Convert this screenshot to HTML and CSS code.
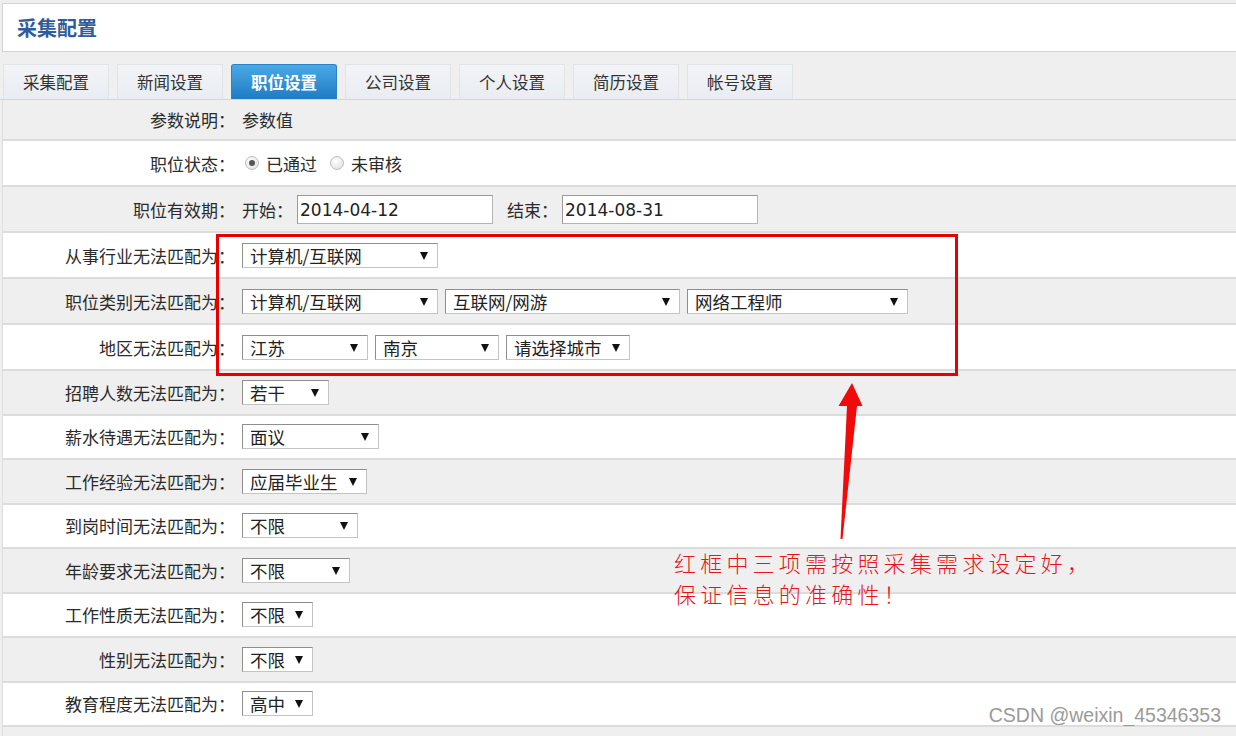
FILE: index.html
```html
<!DOCTYPE html>
<html lang="zh-CN">
  <head>
    <meta charset="utf-8">
    <title>采集配置</title>
    <link rel="stylesheet" href="styles.css">
  </head>
  <body>
    <div id="page">
      <div id="page-header">
        <h1 id="page-title">采集配置</h1>
      </div>

      <div id="tab-bar">
        <div class="tab">采集配置</div>
        <div class="tab">新闻设置</div>
        <div class="tab tab-active">职位设置</div>
        <div class="tab">公司设置</div>
        <div class="tab">个人设置</div>
        <div class="tab">简历设置</div>
        <div class="tab">帐号设置</div>
      </div>

      <div id="config-form">
        <div class="row row-head">
          <div class="row-label">参数说明：</div>
          <div class="row-value">参数值</div>
        </div>
        <div class="row row-tall">
          <div class="row-label">职位状态：</div>
          <div class="row-value">
            <span class="radio radio-on"></span><span class="radio-text">已通过</span>
            <span class="radio"></span><span class="radio-text">未审核</span>
          </div>
        </div>
        <div class="row row-tall">
          <div class="row-label">职位有效期：</div>
          <div class="row-value row-dates">
            <span class="field-name">开始：</span>
            <input class="date-input" type="text" value="2014-04-12">
            <span class="field-name field-gap">结束：</span>
            <input class="date-input" type="text" value="2014-08-31">
          </div>
        </div>
        <div class="row row-tall">
          <div class="row-label">从事行业无法匹配为：</div>
          <div class="row-value">
            <span class="select" style="width:196px">计算机/互联网</span>
          </div>
        </div>
        <div class="row row-tall">
          <div class="row-label">职位类别无法匹配为：</div>
          <div class="row-value">
            <span class="select" style="width:196px">计算机/互联网</span>
            <span class="select" style="width:235px">互联网/网游</span>
            <span class="select" style="width:221px">网络工程师</span>
          </div>
        </div>
        <div class="row row-tall">
          <div class="row-label">地区无法匹配为：</div>
          <div class="row-value">
            <span class="select" style="width:126px">江苏</span>
            <span class="select" style="width:124px">南京</span>
            <span class="select" style="width:124px">请选择城市</span>
          </div>
        </div>
        <div class="row">
          <div class="row-label">招聘人数无法匹配为：</div>
          <div class="row-value"><span class="select" style="width:87px">若干</span></div>
        </div>
        <div class="row">
          <div class="row-label">薪水待遇无法匹配为：</div>
          <div class="row-value"><span class="select" style="width:137px">面议</span></div>
        </div>
        <div class="row">
          <div class="row-label">工作经验无法匹配为：</div>
          <div class="row-value"><span class="select" style="width:125px">应届毕业生</span></div>
        </div>
        <div class="row">
          <div class="row-label">到岗时间无法匹配为：</div>
          <div class="row-value"><span class="select" style="width:116px">不限</span></div>
        </div>
        <div class="row">
          <div class="row-label">年龄要求无法匹配为：</div>
          <div class="row-value"><span class="select" style="width:108px">不限</span></div>
        </div>
        <div class="row">
          <div class="row-label">工作性质无法匹配为：</div>
          <div class="row-value"><span class="select" style="width:71px">不限</span></div>
        </div>
        <div class="row">
          <div class="row-label">性别无法匹配为：</div>
          <div class="row-value"><span class="select" style="width:71px">不限</span></div>
        </div>
        <div class="row">
          <div class="row-label">教育程度无法匹配为：</div>
          <div class="row-value"><span class="select" style="width:71px">高中</span></div>
        </div>
        <div class="row">
          <div class="row-label"></div>
          <div class="row-value"><span class="select" style="width:71px"></span></div>
        </div>
      </div>

      <!-- annotation layer drawn over the form -->
      <div id="note-box"></div>
      <svg id="note-arrow" width="40" height="170" viewBox="830 380 40 170">
        <polygon points="852,383 862.5,406 857,406 842.5,539 840.5,539 847,406 838.5,406" fill="#f00a0a"/>
      </svg>
      <div id="note-text">红框中三项需按照采集需求设定好，<br>保证信息的准确性！</div>
      <div id="watermark">CSDN @weixin_45346353</div>
    </div>
  </body>
</html>
```

FILE: styles.css
```css
html, body {
  margin: 0;
  padding: 0;
  overflow: hidden;
}
body {
  background-color: #efefef;
  color: #2b2b2b;
  font-family: "DejaVu Sans", "Noto Sans CJK SC", sans-serif;
  font-size: 17px;
}
#page {
  position: relative;
  padding-top: 3px;
}
#page-header {
  height: 47px;
  margin-left: 2px;
  background-color: #fff;
  border: 1px solid #d3d3d3;
  border-right: none;
  display: flex;
  align-items: center;
}
#page-title {
  margin: 0 0 0 14px;
  font-family: "Noto Sans CJK SC", sans-serif;
  font-size: 20px;
  font-weight: bold;
  color: #2f5c9a;
}
#tab-bar {
  display: flex;
  gap: 8px;
  padding: 12px 0 0 3px;
  height: 35px;
  border-bottom: 1px solid #d6d6d6;
}
.tab {
  width: 104px;
  height: 34px;
  display: flex;
  align-items: center;
  justify-content: center;
  background: linear-gradient(#f2f4f7, #e9ecf1);
  border: 1px solid #e0e3e8;
  border-bottom: none;
  font-family: "Noto Sans CJK SC", sans-serif;
  font-size: 16.5px;
  color: #333;
}
.tab-active {
  background: linear-gradient(#4aa9e6, #1f7bc4);
  border-color: #2a83c8;
  border-radius: 3px 3px 0 0;
  color: #fff;
  font-weight: bold;
}
#config-form {
  margin-left: 2px;
  border-left: 1px solid #dedede;
}
.row {
  display: flex;
  align-items: center;
  box-sizing: border-box;
  height: 44.5px;
  border-bottom: 2px solid #dcdcdc;
  background-color: #fff;
}
.row:nth-child(odd) {
  background-color: #efefef;
}
.row-head {
  height: 41px;
}
.row-tall {
  height: 46px;
}
.row-label {
  width: 232px;
  flex: none;
  text-align: right;
  font-family: "Noto Sans CJK SC", sans-serif;
}
.row-value {
  display: flex;
  align-items: center;
  gap: 7px;
  padding-left: 7px;
  font-family: "Noto Sans CJK SC", sans-serif;
}
.row-dates {
  gap: 4px;
}
.radio {
  width: 12px;
  height: 12px;
  border: 1px solid #bdbdbd;
  border-radius: 50%;
  background: radial-gradient(circle at 40% 35%, #fff, #dcdcdc);
  display: flex;
  align-items: center;
  justify-content: center;
  margin-left: 3px;
}
.radio-on::after {
  content: "";
  width: 6px;
  height: 6px;
  border-radius: 50%;
  background-color: #555;
}
.radio-text {
  margin-right: 3px;
}
.field-gap {
  margin-left: 10px;
}
.date-input {
  box-sizing: border-box;
  width: 196px;
  height: 29px;
  margin: 0;
  padding: 2px 2px 0;
  border: 1px solid #b4b4b4;
  border-top-color: #9a9a9a;
  border-left-color: #9a9a9a;
  background-color: #fff;
  font-family: "DejaVu Sans", sans-serif;
  font-size: 17px;
  color: #222;
  outline: none;
}
.select {
  position: relative;
  box-sizing: border-box;
  height: 25px;
  padding: 0 0 0 7px;
  display: flex;
  align-items: center;
  background-color: #fff;
  border: 1px solid #c4c4c4;
  border-top-color: #8e8e8e;
  border-left-color: #8e8e8e;
  font-family: "Noto Sans CJK SC", sans-serif;
  font-size: 17.5px;
  color: #222;
  white-space: nowrap;
}
.select::after {
  content: "";
  position: absolute;
  right: 9px;
  top: 8px;
  border-left: 4px solid transparent;
  border-right: 4px solid transparent;
  border-top: 8px solid #111;
}
#note-box {
  position: absolute;
  left: 216px;
  top: 234px;
  width: 736px;
  height: 136px;
  border: 3px solid #e60000;
}
#note-arrow {
  position: absolute;
  left: 830px;
  top: 380px;
}
#note-text {
  position: absolute;
  left: 674px;
  top: 547px;
  font-family: "Noto Sans CJK SC", sans-serif;
  font-size: 22px;
  font-weight: 300;
  letter-spacing: 4.2px;
  line-height: 31px;
  color: #e8141b;
}
#watermark {
  position: absolute;
  right: 15px;
  top: 704px;
  font-family: "Liberation Sans", Arial, sans-serif;
  font-size: 19.5px;
  color: #9a9a9a;
  text-shadow: 0 0 2px #fff, 0 0 2px #fff;
}
```
